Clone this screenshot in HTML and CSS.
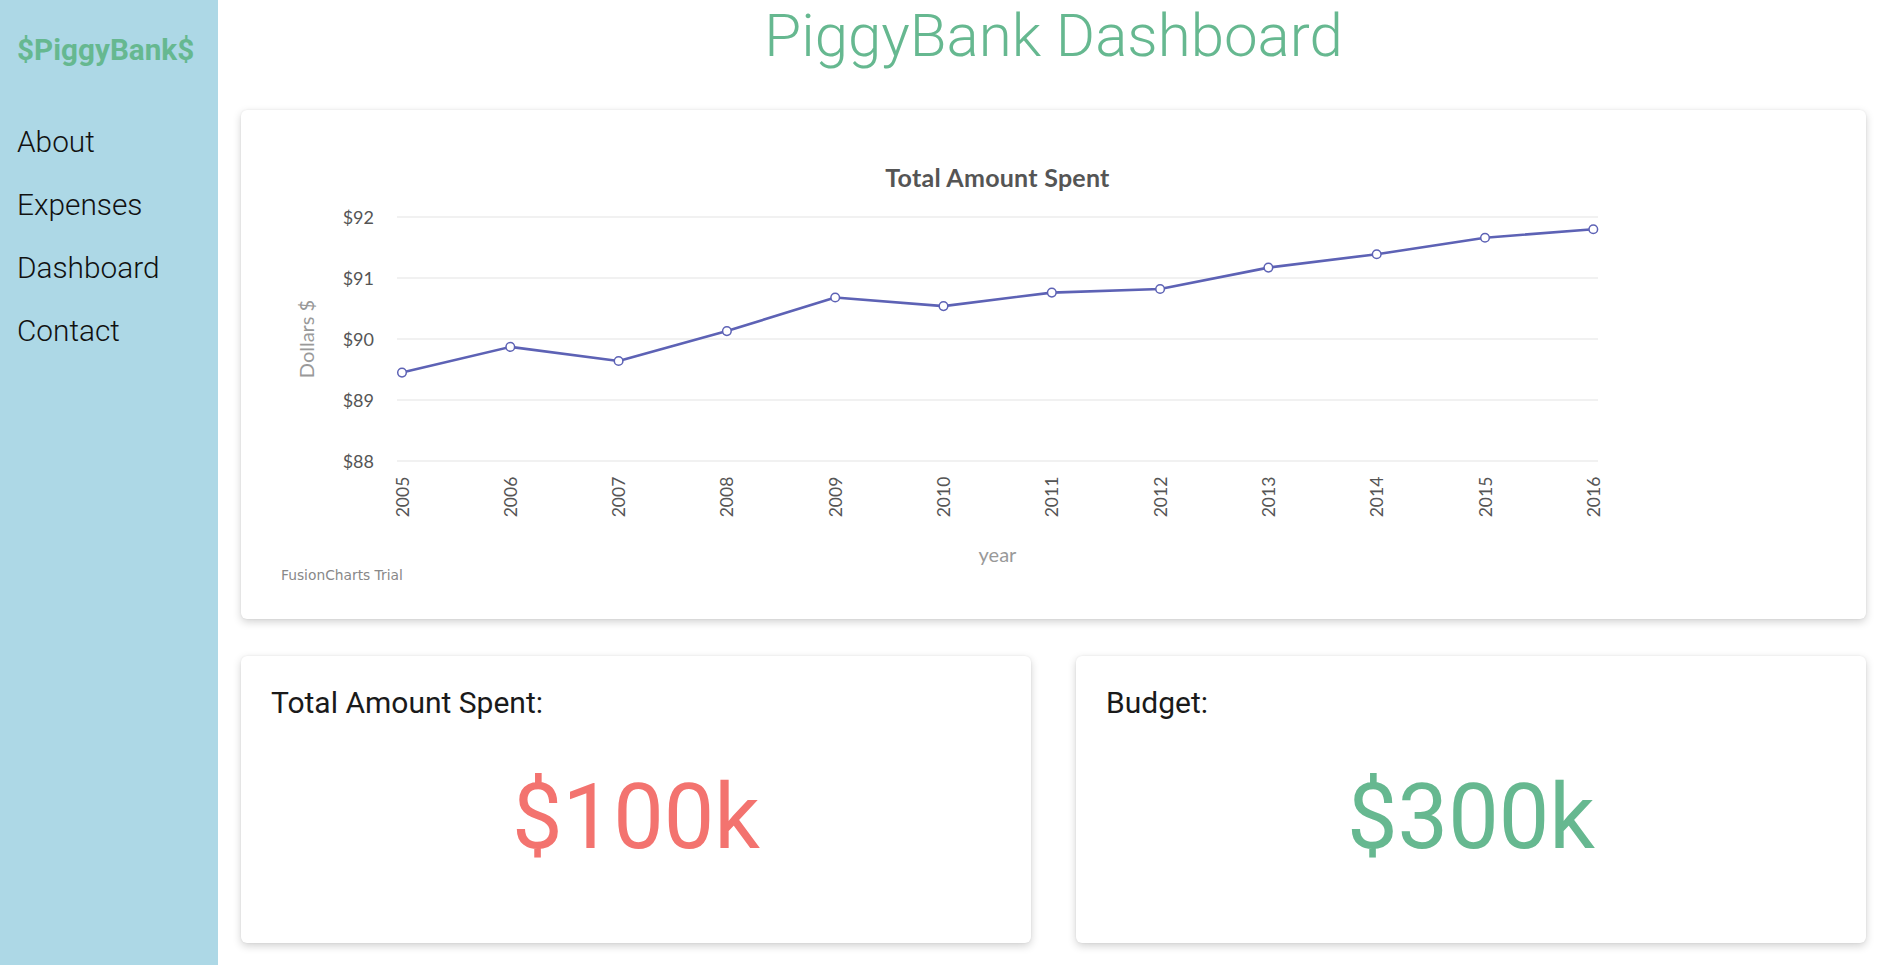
FILE: index.html
```html
<!DOCTYPE html>
<html lang="en">
<head>
<meta charset="utf-8">
<title>PiggyBank Dashboard</title>
<link rel="stylesheet" href="styles.css">
</head>
<body>
<aside class="sidebar">
  <div class="logo">$PiggyBank$</div>
  <nav class="nav">
    <a class="nav-link" href="#">About</a>
    <a class="nav-link" href="#">Expenses</a>
    <a class="nav-link" href="#">Dashboard</a>
    <a class="nav-link" href="#">Contact</a>
  </nav>
</aside>
<main class="main">
  <h1 class="page-title">PiggyBank Dashboard</h1>
  <section class="card chart-card">
    <svg class="chart" width="1400" height="509" viewBox="0 0 1400 509">
      <text class="chart-title" x="756.5" y="76.5" text-anchor="middle">Total Amount Spent</text>
      <g class="grid">
        <line x1="156" y1="107" x2="1357" y2="107"/>
        <line x1="156" y1="168" x2="1357" y2="168"/>
        <line x1="156" y1="229" x2="1357" y2="229"/>
        <line x1="156" y1="290" x2="1357" y2="290"/>
        <line x1="156" y1="351" x2="1357" y2="351"/>
      </g>
      <g class="ylabels" text-anchor="end">
        <text x="133" y="113.5">$92</text>
        <text x="133" y="174.5">$91</text>
        <text x="133" y="235.5">$90</text>
        <text x="133" y="296.5">$89</text>
        <text x="133" y="357.5">$88</text>
      </g>
      <text class="axis-name" transform="translate(73 229) rotate(-90)" text-anchor="middle">Dollars $</text>
      <polyline class="series" points="161,262.6 269.3,236.9 377.6,251 485.9,221.1 594.2,187.5 702.5,196.1 810.8,182.6 919.1,179 1027.4,157.6 1135.7,144.2 1244,127.7 1352.3,119.2"/>
      <g class="anchors">
        <circle cx="161" cy="262.6" r="4.3"/>
        <circle cx="269.3" cy="236.9" r="4.3"/>
        <circle cx="377.6" cy="251" r="4.3"/>
        <circle cx="485.9" cy="221.1" r="4.3"/>
        <circle cx="594.2" cy="187.5" r="4.3"/>
        <circle cx="702.5" cy="196.1" r="4.3"/>
        <circle cx="810.8" cy="182.6" r="4.3"/>
        <circle cx="919.1" cy="179" r="4.3"/>
        <circle cx="1027.4" cy="157.6" r="4.3"/>
        <circle cx="1135.7" cy="144.2" r="4.3"/>
        <circle cx="1244" cy="127.7" r="4.3"/>
        <circle cx="1352.3" cy="119.2" r="4.3"/>
      </g>
      <g class="xlabels" text-anchor="end">
        <text transform="translate(167.5 366.7) rotate(-90)">2005</text>
        <text transform="translate(275.8 366.7) rotate(-90)">2006</text>
        <text transform="translate(384.1 366.7) rotate(-90)">2007</text>
        <text transform="translate(492.4 366.7) rotate(-90)">2008</text>
        <text transform="translate(600.7 366.7) rotate(-90)">2009</text>
        <text transform="translate(709 366.7) rotate(-90)">2010</text>
        <text transform="translate(817.3 366.7) rotate(-90)">2011</text>
        <text transform="translate(925.6 366.7) rotate(-90)">2012</text>
        <text transform="translate(1033.9 366.7) rotate(-90)">2013</text>
        <text transform="translate(1142.2 366.7) rotate(-90)">2014</text>
        <text transform="translate(1250.5 366.7) rotate(-90)">2015</text>
        <text transform="translate(1358.8 366.7) rotate(-90)">2016</text>
      </g>
      <text class="axis-name" x="756.5" y="451.5" text-anchor="middle">year</text>
      <text class="trial" x="40" y="470">FusionCharts Trial</text>
    </svg>
  </section>
  <section class="stats">
    <div class="card stat-card">
      <h2 class="stat-label">Total Amount Spent:</h2>
      <div class="stat-value spent">$100k</div>
    </div>
    <div class="card stat-card">
      <h2 class="stat-label">Budget:</h2>
      <div class="stat-value budget">$300k</div>
    </div>
  </section>
</main>
</body>
</html>
```

FILE: styles.css
```css
* {
  box-sizing: border-box;
}

html, body {
  margin: 0;
  padding: 0;
}

body {
  display: flex;
  min-height: 965px;
  font-family: Roboto, "Liberation Sans", sans-serif;
  background: #ffffff;
  color: #111111;
}

.sidebar {
  width: 218px;
  flex: 0 0 218px;
  background: #add8e6;
  padding: 32px 0 0 17px;
}

.logo {
  font-size: 29.7px;
  line-height: 35px;
  font-weight: 700;
  color: #66b890;
}

.nav {
  display: flex;
  flex-direction: column;
  margin-top: 43px;
}

.nav-link {
  font-size: 29.8px;
  line-height: 63px;
  font-weight: 300;
  color: #111111;
  text-decoration: none;
}

.main {
  flex: 1;
  padding: 0 15px 0 23px;
  min-width: 0;
}

.page-title {
  margin: 0;
  font-size: 60px;
  line-height: 71px;
  font-weight: 300;
  color: #66b890;
  text-align: center;
}

.card {
  background: #ffffff;
  border-radius: 6px;
  box-shadow: 0 3px 8px rgba(0, 0, 0, 0.18), 0 0 2px rgba(0, 0, 0, 0.08);
}

.chart-card {
  margin-top: 39px;
  height: 509px;
  overflow: hidden;
}

.chart {
  display: block;
  font-family: Lato, "Open Sans", sans-serif;
}

.chart-title {
  font-size: 25px;
  font-weight: 700;
  letter-spacing: 0.25px;
  fill: #555555;
}

.grid line {
  stroke: #ececec;
  stroke-width: 1.5;
}

.ylabels text,
.xlabels text {
  font-size: 18px;
  fill: #555555;
}

.xlabels text {
  font-size: 17.5px;
}

.axis-name {
  font-size: 20px;
  fill: #999999;
}

.series {
  fill: none;
  stroke: #5d62b5;
  stroke-width: 2.6;
  stroke-linejoin: round;
}

.anchors circle {
  fill: #ffffff;
  stroke: #5d62b5;
  stroke-width: 1.5;
}

.trial {
  font-family: "DejaVu Sans", Verdana, sans-serif;
  font-size: 13.8px;
  fill: #888888;
}

.stats {
  display: grid;
  grid-template-columns: 1fr 1fr;
  gap: 45px;
  margin-top: 37px;
}

.stat-card {
  height: 287px;
  padding: 30px 30px 0 30px;
}

.stat-label {
  margin: 0;
  font-size: 30px;
  line-height: 34px;
  font-weight: 400;
  color: #1a1a1a;
}

.stat-value {
  margin-top: 44px;
  font-size: 90px;
  line-height: 108px;
  font-weight: 400;
  text-align: center;
}

.spent {
  color: #f3736f;
}

.budget {
  color: #66b890;
}
```
